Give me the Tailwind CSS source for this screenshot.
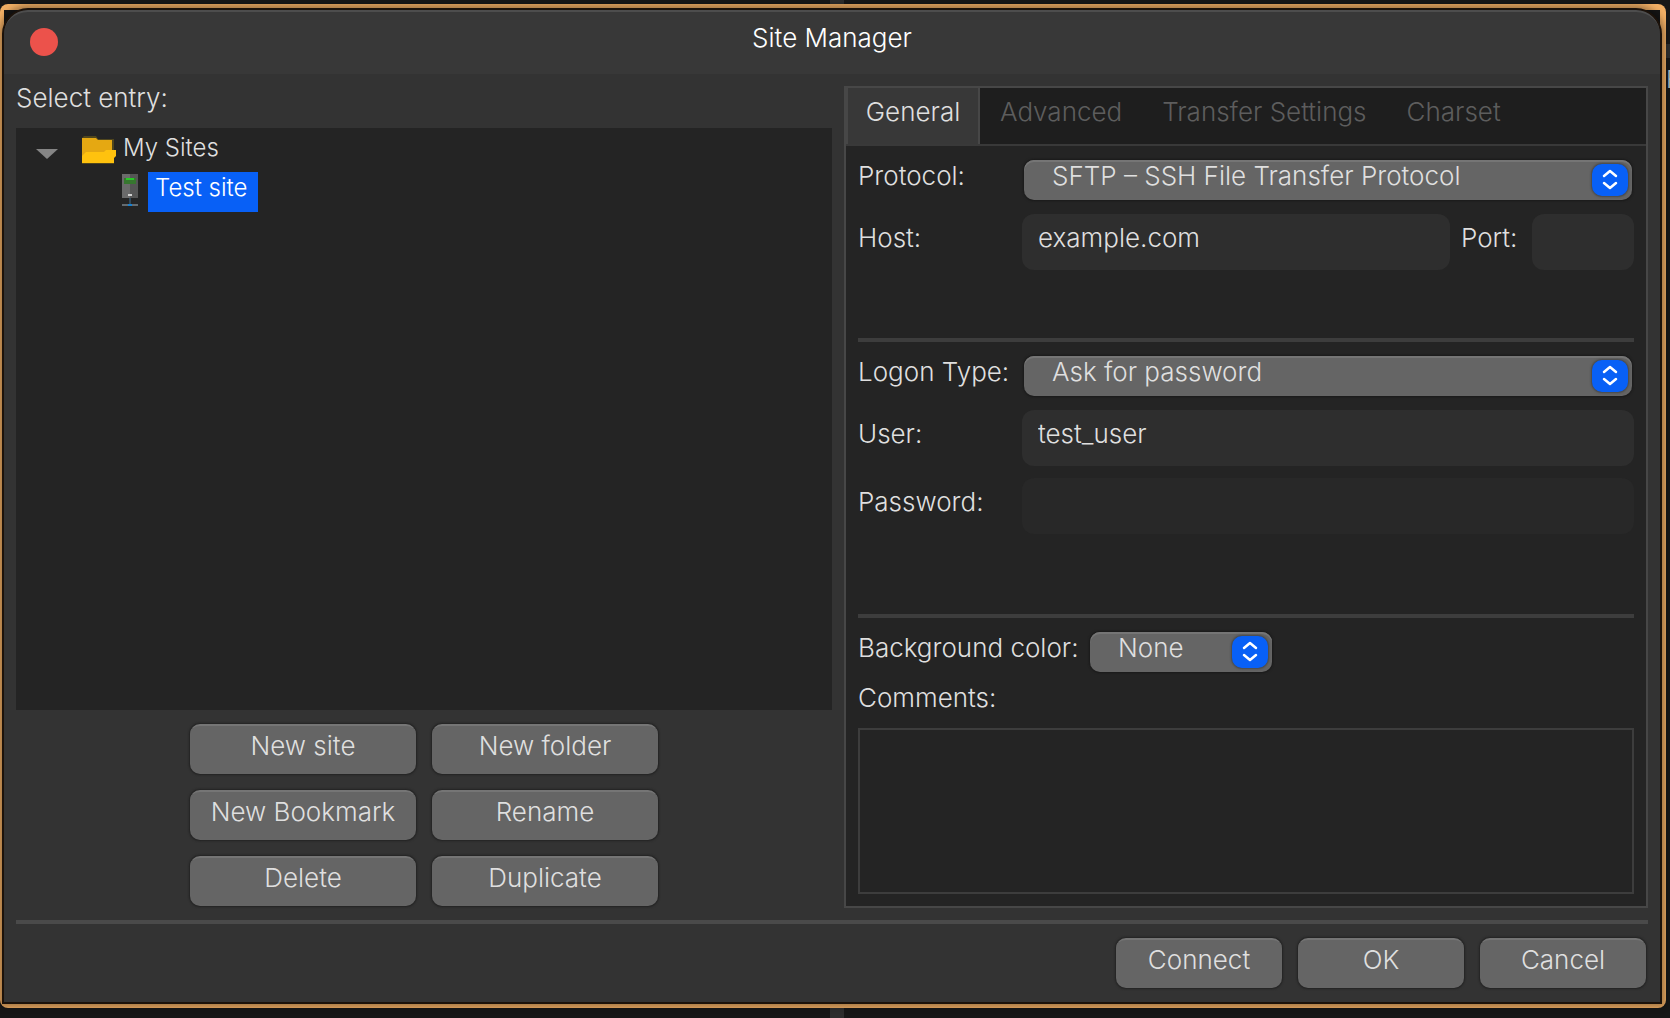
<!DOCTYPE html>
<html lang="en">
<head>
<meta charset="utf-8">
<title>Site Manager</title>
<script src="https://cdn.jsdelivr.net/npm/@tailwindcss/browser@4"></script>
</head>
<body class="relative flex min-h-screen flex-col overflow-x-hidden bg-[#171717] pt-1 pr-1 pb-[10px] font-['Inter',sans-serif] text-[26px] leading-8 font-light text-[#dfdfdf]">
  <!-- parent window showing behind the dialog -->
  <div class="absolute inset-y-0 left-1/2 w-[14px] -translate-x-[5px] bg-[#2d2d2d]"></div>
  <div class="absolute top-11 right-0 h-[14px] w-1 bg-[#2d2d2d]"></div>
  <div class="absolute top-16 right-0 w-1 overflow-hidden text-2xl text-[#b0b8c0]">F</div>

  <!-- highlighted dialog frame -->
  <div class="relative flex flex-1 flex-col rounded-lg bg-[#f0ae64] pt-[6px] pr-[6px] pb-[6px] pl-1">
    <div class="flex flex-1 flex-col bg-[#151515]">
      <div class="flex flex-1 flex-col overflow-hidden rounded-t-[24px] bg-[#333333] shadow-[0_0_0_2px_#1c120a,0_0_6px_5px_rgba(0,0,0,0.32)]">
        <header class="relative flex h-16 items-start justify-center rounded-t-[24px] border-t-2 border-[#4d4d4d] bg-[#383838] pt-[10px]">
          <button aria-label="Close" class="absolute top-4 left-[26px] size-7 rounded-full bg-[#ec524b]"></button>
          <h1 class="text-white">Site Manager</h1>
        </header>

        <main class="flex flex-1 flex-col px-3 pt-3">
          <div class="grid flex-1 grid-cols-[816fr_804fr] gap-3">
            <section class="flex min-w-0 flex-col">
              <h2 class="-mt-1 pb-[14px]">Select entry:</h2>
              <div role="tree" class="flex-1 bg-[#242424] pt-1 text-2xl leading-8">
                <div role="treeitem" aria-expanded="true" class="flex h-10 items-start">
                  <svg class="mt-[17px] ml-5 h-[10px] w-[22px]" viewBox="0 0 22 10"><path d="M0 0H22L11 10Z" fill="#858585"/></svg>
                  <svg class="mt-1 ml-6 h-[30px] w-[35px]" viewBox="0 0 35 30"><path d="M0 2L2 0H14L16 3H32V28H0Z" fill="#50461d"/><path d="M0 2H14L16 4H30V27H0Z" fill="#e5a812"/><path d="M4 16H22L24 14H34V20L32 22V27H0V20Z" fill="#ffc20e"/></svg>
                  <span class="ml-[6px]">My Sites</span>
                </div>
                <div role="treeitem" aria-selected="true" class="flex h-10 items-start pl-[106px]">
                  <svg class="mt-[2px] h-[34px] w-4" viewBox="0 0 16 34"><path d="M0 0H16V24H0Z" fill="#555"/><path d="M0 0H8V24H0Z" fill="#6b6b6b"/><path d="M2 4H14V10H2Z" fill="#37772f"/><path d="M4 4H12V6H4Z" fill="#28c926"/><path d="M6 20H10V22H6Z" fill="#d0d0d0"/><path d="M7 24H9V30H7Z" fill="#334858"/><path d="M0 30H16V32H0Z" fill="#646b70"/><path d="M6 30H10V32H6Z" fill="#1680d0"/></svg>
                  <span class="ml-[10px] h-10 w-[110px] bg-[#0860f6] pl-[7px] text-white">Test site</span>
                </div>
              </div>
              <div class="mt-[14px] mb-[2px] grid grid-cols-[226px_226px] justify-center gap-4">
                <button class="h-[50px] rounded-[10px] border-t-2 border-[#757575] bg-[#656565] pb-2 shadow-[0_0_2px_1px_#222]">New site</button>
                <button class="h-[50px] rounded-[10px] border-t-2 border-[#757575] bg-[#656565] pb-2 shadow-[0_0_2px_1px_#222]">New folder</button>
                <button class="h-[50px] rounded-[10px] border-t-2 border-[#757575] bg-[#656565] pb-2 shadow-[0_0_2px_1px_#222]">New Bookmark</button>
                <button class="h-[50px] rounded-[10px] border-t-2 border-[#757575] bg-[#656565] pb-2 shadow-[0_0_2px_1px_#222]">Rename</button>
                <button class="h-[50px] rounded-[10px] border-t-2 border-[#757575] bg-[#656565] pb-2 shadow-[0_0_2px_1px_#222]">Delete</button>
                <button class="h-[50px] rounded-[10px] border-t-2 border-[#757575] bg-[#656565] pb-2 shadow-[0_0_2px_1px_#222]">Duplicate</button>
              </div>
            </section>

            <section class="flex min-w-0 flex-col border-2 border-[#474747] bg-[#242424]">
              <div role="tablist" class="flex h-[58px] border-b-2 border-[#393939] bg-[#1e1e1e] text-[#5d5d5d]">
                <button role="tab" aria-selected="true" class="w-[134px] border-x-2 border-[#474747] bg-[#383838] pb-2 text-[#dfdfdf]">General</button>
                <button role="tab" class="px-5 pb-2">Advanced</button>
                <button role="tab" class="px-5 pb-2">Transfer Settings</button>
                <button role="tab" class="px-5 pb-2">Charset</button>
              </div>

              <form class="flex flex-1 flex-col px-3 pt-[14px] pb-3">
                <div class="flex h-10">
                  <label for="protocol" class="w-[164px]">Protocol:</label>
                  <div class="relative mx-[2px] flex-1">
                    <select id="protocol" class="block h-10 w-full appearance-none rounded-[10px] bg-[#656565] pb-2 pl-7 shadow-[inset_0_2px_0_#757575,0_0_2px_1px_#1a1a1a]"><option>SFTP – SSH File Transfer Protocol</option></select>
                    <svg class="pointer-events-none absolute top-1 right-1 h-8 w-9 rounded-[10px] bg-[#0860f6] shadow-[0_0_2px_1px_#484848]" viewBox="0 0 36 32" fill="none" stroke="#fff" stroke-width="2.5" stroke-linecap="round" stroke-linejoin="round"><path d="M12 12L18 7L24 12M12 19L18 24L24 19"/></svg>
                  </div>
                </div>
                <div class="mt-[14px] flex h-14">
                  <label for="host" class="w-[164px] pt-2">Host:</label>
                  <input id="host" value="example.com" class="min-w-0 flex-1 rounded-xl bg-[#2e2e2e] px-4 pb-2">
                  <label for="port" class="w-[82px] pt-2 pl-[11px]">Port:</label>
                  <input id="port" class="w-[102px] rounded-xl bg-[#2e2e2e] px-4 pb-2">
                </div>
                <hr class="mt-[68px] border-t-4 border-[#3d3d3d]">
                <div class="mt-[14px] flex h-10">
                  <label for="logon" class="w-[164px]">Logon Type:</label>
                  <div class="relative mx-[2px] flex-1">
                    <select id="logon" class="block h-10 w-full appearance-none rounded-[10px] bg-[#656565] pb-2 pl-7 shadow-[inset_0_2px_0_#757575,0_0_2px_1px_#1a1a1a]"><option>Ask for password</option></select>
                    <svg class="pointer-events-none absolute top-1 right-1 h-8 w-9 rounded-[10px] bg-[#0860f6] shadow-[0_0_2px_1px_#484848]" viewBox="0 0 36 32" fill="none" stroke="#fff" stroke-width="2.5" stroke-linecap="round" stroke-linejoin="round"><path d="M12 12L18 7L24 12M12 19L18 24L24 19"/></svg>
                  </div>
                </div>
                <div class="mt-[14px] flex h-14">
                  <label for="user" class="w-[164px] pt-2">User:</label>
                  <input id="user" value="test_user" class="min-w-0 flex-1 rounded-xl bg-[#2e2e2e] px-4 pb-2">
                </div>
                <div class="mt-3 flex h-14">
                  <label for="password" class="w-[164px] pt-2">Password:</label>
                  <input id="password" type="password" disabled class="min-w-0 flex-1 rounded-xl bg-[#282828] px-4 pb-2">
                </div>
                <hr class="mt-20 border-t-4 border-[#3d3d3d]">
                <div class="mt-[14px] flex h-10">
                  <label for="background" class="w-[232px]">Background color:</label>
                  <div class="relative w-[182px]">
                    <select id="background" class="block h-10 w-full appearance-none rounded-[10px] bg-[#656565] pb-2 pl-7 shadow-[inset_0_2px_0_#757575,0_0_2px_1px_#1a1a1a]"><option>None</option></select>
                    <svg class="pointer-events-none absolute top-1 right-1 h-8 w-9 rounded-[10px] bg-[#0860f6] shadow-[0_0_2px_1px_#484848]" viewBox="0 0 36 32" fill="none" stroke="#fff" stroke-width="2.5" stroke-linecap="round" stroke-linejoin="round"><path d="M12 12L18 7L24 12M12 19L18 24L24 19"/></svg>
                  </div>
                </div>
                <label for="comments" class="mt-[10px]">Comments:</label>
                <textarea id="comments" class="mt-[14px] flex-1 resize-none border-2 border-[#3d3d3d] bg-[#242424] p-2"></textarea>
              </form>
            </section>
          </div>

          <hr class="mt-3 border-t-4 border-[#4a4a4a]">
          <footer class="flex justify-end gap-4 pt-[14px] pr-[2px] pb-[14px]">
            <button class="h-[50px] w-[166px] rounded-[10px] border-t-2 border-[#757575] bg-[#656565] pb-2 shadow-[0_0_2px_1px_#222]">Connect</button>
            <button class="h-[50px] w-[166px] rounded-[10px] border-t-2 border-[#757575] bg-[#656565] pb-2 shadow-[0_0_2px_1px_#222]">OK</button>
            <button class="h-[50px] w-[166px] rounded-[10px] border-t-2 border-[#757575] bg-[#656565] pb-2 shadow-[0_0_2px_1px_#222]">Cancel</button>
          </footer>
        </main>
      </div>
    </div>
  </div>
</body>
</html>
